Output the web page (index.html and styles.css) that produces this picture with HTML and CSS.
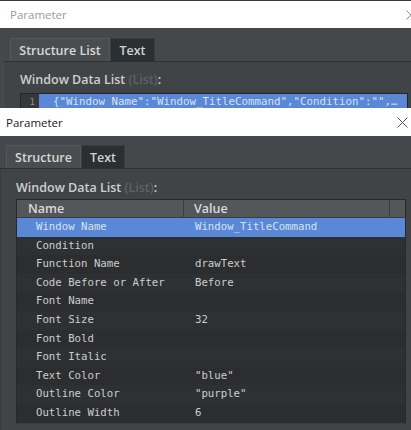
FILE: index.html
```html
<!DOCTYPE html>
<html>
<head>
<meta charset="utf-8">
<link rel="stylesheet" href="styles.css">
</head>
<body>
<div class="win win1">
  <div class="titlebar">
    <span class="title">Parameter</span>
    <svg class="close" width="10" height="10" viewBox="0 0 10 10"><path d="M0.5 0.5L9.5 9.5M9.5 0.5L0.5 9.5" stroke="#8a8a8a" stroke-width="1"/></svg>
  </div>
  <div class="wbody">
    <div class="tabs">
      <div class="tab active">Structure List</div>
      <div class="tab">Text</div>
    </div>
    <div class="panel">
      <div class="label">Window Data List <span class="dim">(List)</span>:</div>
      <div class="codelist">
        <div class="gutter">1</div>
        <div class="codeline">{"Window Name":"Window_TitleCommand","Condition":"",…</div>
      </div>
    </div>
  </div>
</div>
<div class="win win2">
  <div class="titlebar">
    <span class="title">Parameter</span>
    <svg class="close" width="11" height="11" viewBox="0 0 11 11"><path d="M0.5 0.5L10.5 10.5M10.5 0.5L0.5 10.5" stroke="#555" stroke-width="1"/></svg>
  </div>
  <div class="wbody">
    <div class="tabs">
      <div class="tab active">Structure</div>
      <div class="tab">Text</div>
    </div>
    <div class="panel">
      <div class="label">Window Data List <span class="dim">(List)</span>:</div>
      <div class="table">
        <div class="thead">
          <div class="th c1">Name</div>
          <div class="th c2">Value</div>
          <div class="th c3"></div>
        </div>
        <div class="row sel"><div class="c1">Window Name</div><div class="c2">Window_TitleCommand</div></div>
        <div class="row odd"><div class="c1">Condition</div><div class="c2"></div></div>
        <div class="row"><div class="c1">Function Name</div><div class="c2">drawText</div></div>
        <div class="row odd"><div class="c1">Code Before or After</div><div class="c2">Before</div></div>
        <div class="row"><div class="c1">Font Name</div><div class="c2"></div></div>
        <div class="row odd"><div class="c1">Font Size</div><div class="c2">32</div></div>
        <div class="row"><div class="c1">Font Bold</div><div class="c2"></div></div>
        <div class="row odd"><div class="c1">Font Italic</div><div class="c2"></div></div>
        <div class="row"><div class="c1">Text Color</div><div class="c2">"blue"</div></div>
        <div class="row odd"><div class="c1">Outline Color</div><div class="c2">"purple"</div></div>
        <div class="row"><div class="c1">Outline Width</div><div class="c2">6</div></div>
      </div>
    </div>
  </div>
</div>
</body>
</html>
```
FILE: styles.css
```css
* { box-sizing: border-box; }
html, body { margin: 0; padding: 0; }
body {
  width: 411px;
  height: 430px;
  overflow: hidden;
  background: #3f4244;
  font-family: "Open Sans", "Noto Sans", sans-serif;
}
.win { display: flex; flex-direction: column; overflow: hidden; }
.win1 { height: 108px; width: 422px; border-top: 1px solid #3a3c3e; }
.win2 { height: 322px; width: 411px; }
.titlebar {
  height: 27px;
  flex: none;
  background: #fff;
  display: flex;
  align-items: center;
  justify-content: space-between;
  font-size: 11.5px;
}
.win1 .titlebar { padding: 0 6px 0 10px; }
.win1 .title { color: #9a9a9a; }
.win2 .titlebar { height: 28px; padding: 0 3px 0 6px; }
.win2 .title { color: #1a1a1a; }
.wbody {
  flex: 1;
  background: #45484a;
  display: flex;
  flex-direction: column;
}
.win1 .wbody { padding: 10px 0 0 3px; }
.win2 .wbody { padding: 9px 0 0 0; }
.tabs {
  display: flex;
  height: 24px;
  border-bottom: 1px solid #2e3032;
  flex: none;
}
.win1 .tabs { padding-left: 7px; }
.win2 .tabs { padding-left: 6px; }
.tab {
  display: flex;
  align-items: center;
  justify-content: center;
  white-space: nowrap;
  font-size: 12.5px;
  font-weight: 600;
  color: #d2d2d2;
  background: #2c2f31;
  border: 1px solid #3a3d3f;
  border-bottom: 0;
}
.tab.active {
  background: #4a4d4f;
  border-color: #55585a;
  color: #d8d8d8;
}
.win1 .tab.active { width: 100px; }
.win1 .tab { width: 45px; }
.win2 .tab.active { width: 75px; }
.win2 .tab { width: 44px; }
.panel {
  flex: 1;
  display: flex;
  flex-direction: column;
  background: #414446;
  border-left: 1px solid #4c4f51;
}
.win1 .panel { padding: 9px 0 0 16px; }
.win2 .panel { padding: 10px 6px 0 15px; border-left-color: #393c3e; }
.label {
  font-size: 12.5px;
  font-weight: 600;
  color: #cfcfcf;
  height: 18px;
  line-height: 18px;
  white-space: nowrap;
}
.dim { color: #5e6163; }
.codelist {
  display: flex;
  height: 17px;
  margin-top: 4px;
  margin-right: 14px;
  background: #2a2d2f;
  border: 1px solid #232527;
  border-bottom: 0;
}
.gutter {
  width: 18px;
  flex: none;
  text-align: right;
  padding-right: 4px;
  font-family: "DejaVu Sans Mono", monospace;
  font-size: 9px;
  line-height: 16px;
  color: #8c8f91;
  background: #353839;
}
.codeline {
  flex: 1;
  background: #5a87d6;
  color: #d6e2f4;
  font-family: "DejaVu Sans Mono", monospace;
  font-size: 10.8px;
  line-height: 16px;
  padding-left: 14px;
  white-space: nowrap;
  overflow: hidden;
}
.table {
  margin-top: 2px;
  display: flex;
  flex-direction: column;
  border: 1px solid #27292b;
  border-bottom-color: #3b3e40;
  background: #2b2e30;
  width: 390px;
}
.thead {
  display: flex;
  height: 18px;
  background: #535759;
  border-bottom: 1px solid #3a3d3f;
}
.th {
  font-size: 12.5px;
  font-weight: 600;
  color: #d9d9d9;
  line-height: 17px;
}
.thead .c1 { width: 167px; padding-left: 11px; border-right: 1px solid #3a3d3f; }
.thead .c2 { width: 206px; padding-left: 10px; border-right: 1px solid #3a3d3f; }
.thead .c3 { flex: 1; }
.row {
  display: flex;
  height: 18.6px;
  background: #2b2d2f;
  font-family: "DejaVu Sans Mono", monospace;
  font-size: 10.7px;
  line-height: 18.6px;
  color: #cdcdcd;
  width: 388px;
}
.row.odd { background: #2e3133; }
.row.sel { background: #5a87d6; color: #d6e2f4; }
.row .c1 { width: 167px; padding-left: 19px; }
.row .c2 { padding-left: 11px; }
```
